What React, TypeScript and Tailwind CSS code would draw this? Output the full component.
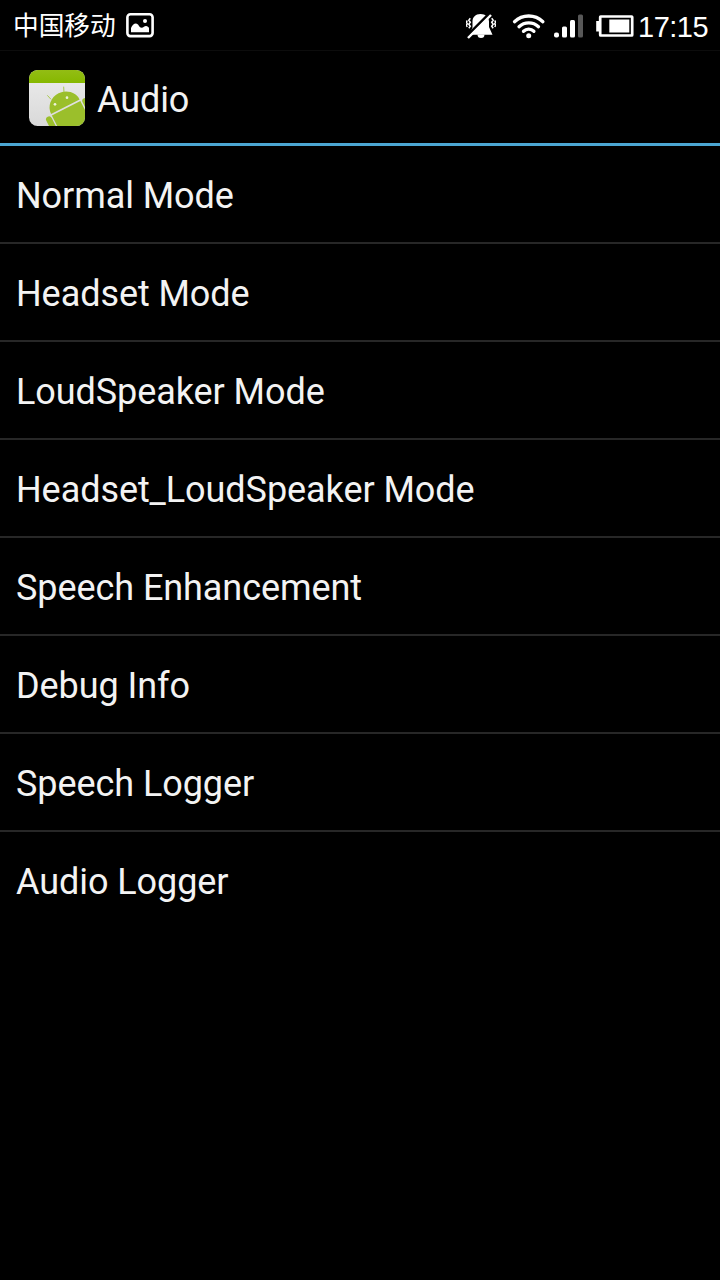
import React from 'react';

const modes = [
  'Normal Mode',
  'Headset Mode',
  'LoudSpeaker Mode',
  'Headset_LoudSpeaker Mode',
  'Speech Enhancement',
  'Debug Info',
  'Speech Logger',
  'Audio Logger',
];

const PictureIcon = () => (
  <svg width="28" height="25" viewBox="0 0 28 25" fill="none">
    <rect x="1.4" y="1.3" width="25.2" height="21.8" rx="3" stroke="#fff" strokeWidth="2.6" />
    <circle cx="19" cy="8" r="2" fill="#fff" />
    <path d="M5 19.3v-4.2c1-2.9 2.9-4.7 4.9-4.7 2.7 0 3.3 4.3 5.7 4.3 2 0 2.8-1.700 4.400-1.700 1.600 0 2.500 1 3 2v4.300z" fill="#fff" />
  </svg>
);

const MuteIcon = () => (
  <svg width="30" height="26" viewBox="0 0 30 26" fill="none">
    <path d="M14.500 1C9.500 1 6.500 4.300 6.500 8.500v6L3.500 21.800h23L23 14V8.500C23 4.300 19.500 1 14.500 1z" fill="#fff" />
    <path d="M11.500 21.500a3.500 3.500 0 0 0 7 0z" fill="#fff" />
    <path d="M0 24 23.500 0.500" stroke="#000" strokeWidth="2.800" />
    <path d="M2 25 25 2" stroke="#fff" strokeWidth="2.400" />
    <path d="m4.300 5.300-1.500 2 1.500 2-1.500 2 1.500 2-1.500 2M1.300 7.500l-1 1.600 1 1.600-1 1.600 1 1.500" stroke="#fff" strokeWidth="1.500" />
    <path d="m25.700 5.300 1.500 2-1.500 2 1.500 2-1.500 2 1.500 2M28.700 7.500l1 1.600-1 1.600 1 1.600-1 1.500" stroke="#fff" strokeWidth="1.500" />
  </svg>
);

const WifiIcon = () => (
  <svg width="34" height="26" viewBox="0 0 34 26" fill="none" stroke="#fff" strokeWidth="3.3" strokeLinecap="round">
    <path d="M2.5 8.7a20.5 20.5 0 0 1 28.4 0" />
    <path d="M7 13.7a14.2 14.2 0 0 1 19.5 0" />
    <path d="M11.5 18.3a7.5 7.5 0 0 1 10.4 0" />
    <circle cx="16.7" cy="22.7" r="2.5" fill="#fff" stroke="none" />
  </svg>
);

const SignalIcon = () => (
  <svg width="30" height="24" viewBox="0 0 30 24" fill="#fff">
    <rect x="0" y="18.6" width="5" height="5" rx="2" />
    <rect x="8" y="12.5" width="5" height="11.1" rx="1.5" />
    <rect x="16" y="6" width="5" height="17.6" rx="1.5" />
    <rect x="24" y="0.5" width="5" height="23.1" rx="1.5" fill="#585858" />
  </svg>
);

const BatteryIcon = () => (
  <svg width="38" height="22" viewBox="0 0 38 22" fill="none">
    <rect x="4.2" y="1.5" width="32" height="19" rx="0.5" stroke="#fff" strokeWidth="2.7" />
    <rect x="0.2" y="6" width="3" height="10.5" fill="#fff" />
    <rect x="13.3" y="4.5" width="20" height="13" fill="#fff" />
  </svg>
);

const AppIcon = () => (
  <svg width="56" height="56" viewBox="0 0 168 168" fill="none">
    <defs>
      <clipPath id="tile">
        <rect width="168" height="168" rx="26" />
      </clipPath>
      <linearGradient id="paper" x1="0" y1="0" x2="0" y2="1">
        <stop offset="0" stopColor="#ececec" />
        <stop offset="1" stopColor="#d9d9d9" />
      </linearGradient>
      <linearGradient id="band" x1="0" y1="0" x2="0" y2="1">
        <stop offset="0" stopColor="#93bd14" />
        <stop offset="1" stopColor="#86b800" />
      </linearGradient>
    </defs>
    <g clipPath="url(#tile)">
      <rect width="168" height="168" fill="url(#paper)" />
      <rect width="168" height="39" fill="url(#band)" />
      <path d="M55 76 66 88M104 50l1 18" stroke="#a9c94f" strokeWidth="3" />
      <g transform="translate(109 110) rotate(-27)" fill="#9bbf2b">
        <path d="M-48 0a48 45 0 0 1 96 0z" />
        <rect x="-48" y="5" width="96" height="100" />
        <rect x="-70" y="3" width="18" height="70" rx="9" />
        <rect x="52" y="3" width="18" height="70" rx="9" />
      </g>
      <circle cx="78" cy="103" r="4" fill="#eef3dc" />
      <circle cx="114" cy="83" r="4" fill="#eef3dc" />
    </g>
  </svg>
);

const StatusBar = () => (
  <div className="flex h-[51px] items-start justify-between border-b border-[#0c0c0c] text-white">
    <div className="flex items-start pl-[13px]">
      <span className="mt-[5px] font-['Noto_Sans_CJK_SC',sans-serif] text-[25.7px] leading-[38px]">中国移动</span>
      <div className="mt-[13px] ml-2.5">
        <PictureIcon />
      </div>
    </div>
    <div className="flex items-start pr-3">
      <div className="mt-[13px]">
        <MuteIcon />
      </div>
      <div className="mt-[13px] ml-4">
        <WifiIcon />
      </div>
      <div className="mt-3.5 ml-2">
        <SignalIcon />
      </div>
      <div className="mt-[15px] ml-3">
        <BatteryIcon />
      </div>
      <span className="mt-2 ml-1 w-[70px] font-['Liberation_Sans',sans-serif] text-[29px] leading-[38px] tracking-[-0.5px] whitespace-nowrap">
        17:15
      </span>
    </div>
  </div>
);

const App = () => {
  return (
    <div className="min-h-screen w-full bg-black font-['Roboto',sans-serif] text-[#f3f3f3]">
      <StatusBar />

      <header className="flex h-[95px] items-center border-b-3 border-[#4ba6d2] pl-[29px]">
        <div className="mt-0.5">
          <AppIcon />
        </div>
        <h1 className="mt-1.5 ml-3 text-[36px] leading-[42px] tracking-[-0.1px]">Audio</h1>
      </header>

      <ul>
        {modes.map((mode) => (
          <li
            key={mode}
            className="flex h-[98px] items-center border-b-2 border-[#272727] px-4 pt-1 text-[36px] tracking-[-0.07px] last:border-transparent"
          >
            {mode}
          </li>
        ))}
      </ul>
    </div>
  );
};

export default App;
